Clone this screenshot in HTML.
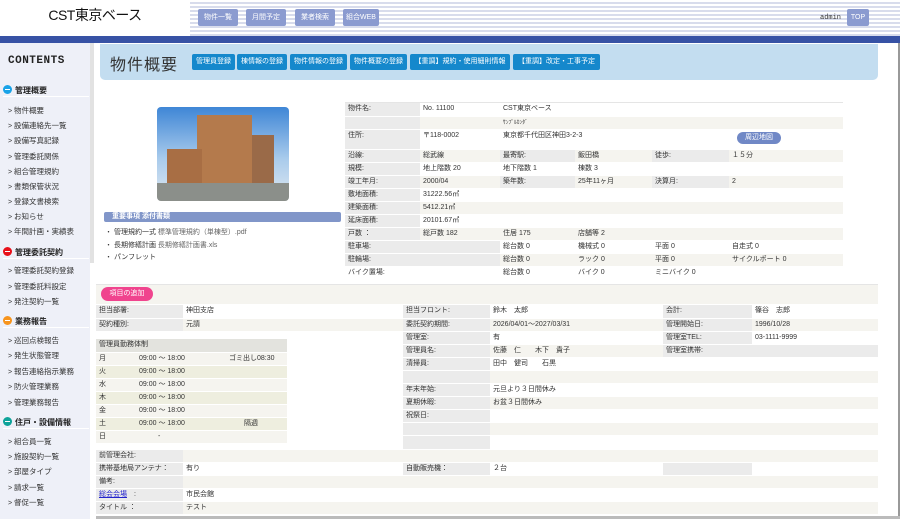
<!DOCTYPE html>
<html><head><meta charset="utf-8"><style>
*{margin:0;padding:0;box-sizing:border-box}
body{width:900px;height:519px;overflow:hidden;background:#fff;font-family:"Liberation Sans","Noto Sans CJK JP",sans-serif;font-size:8px;color:#333;position:relative}
.abs{position:absolute}
#hdr{left:0;top:0;width:900px;height:36px;background:repeating-linear-gradient(#fff 0 2px,#d8dcec 2px 4px)}
#logo{left:0;top:0;width:190px;height:36px;background:#fff;font-size:14px;color:#111;text-align:center;line-height:30px;letter-spacing:-0.5px}
.nb{top:9px;height:17px;background:#8b9bd0;color:#fff;font-size:7px;line-height:17px;text-align:center;border-radius:2px}
#bar{left:0;top:36px;width:900px;height:7px;background:#3752a5}
#side{left:0;top:43px;width:90px;height:476px;background:#eef0f8}
#sb{left:90px;top:43px;width:6px;height:476px;background:#fff}
#sbt{left:90px;top:43px;width:4px;height:220px;background:#e2e2e2}
.sh{left:3px;font-size:8px;font-weight:bold;color:#222;width:86px;border-bottom:1px solid #fff;height:12px}
.sh i{display:inline-block;width:9px;height:9px;border-radius:50%;vertical-align:-1px;margin-right:3px;position:relative}
.sh i:after{content:"";position:absolute;left:2px;top:4px;width:5px;height:1px;background:#fff}
.si{left:8px;font-size:7.5px;color:#333}
.si:before{content:"> ";font-size:7px}
#tp{left:100px;top:44px;width:778px;height:36px;background:#c3ddf0;border-radius:0 0 5px 5px}
#tt{left:110px;top:51px;font-size:16px;color:#333;letter-spacing:1px}
.tb{top:54px;height:16px;background:#1588cc;color:#fff;font-size:7px;line-height:16px;text-align:center;border-radius:2px}
table{border-collapse:collapse;table-layout:fixed;position:absolute}
td{padding:0 3px;font-size:7px;white-space:nowrap;overflow:hidden;border-bottom:1px solid #fff;vertical-align:top;line-height:12px}
.L{background:#ebebeb}
.g{background:#f5f4ef}
.w{background:#fff}
</style></head><body>
<div id="hdr" class="abs"></div>
<div id="logo" class="abs">CST東京ベース</div>
<div class="abs nb" style="left:198px;width:40px">物件一覧</div>
<div class="abs nb" style="left:246px;width:40px">月間予定</div>
<div class="abs nb" style="left:295px;width:40px">業者検索</div>
<div class="abs nb" style="left:343px;width:36px">組合WEB</div>
<div class="abs" style="left:820px;top:14px;font-size:7px;font-family:'Liberation Mono',monospace;color:#333">admin</div>
<div class="abs nb" style="left:847px;width:22px">TOP</div>
<div id="bar" class="abs"></div>
<div class="abs" style="left:898px;top:43px;width:2px;height:476px;background:#999"></div>
<div id="side" class="abs"></div>
<div id="sb" class="abs"></div><div id="sbt" class="abs"></div>
<div class="abs" style="left:8px;top:55px;font-size:11px;font-weight:bold;font-family:'Liberation Mono',monospace;color:#222;letter-spacing:0.5px">CONTENTS</div>
<div class="abs sh" style="top:85px"><i style="background:#19a3e8"></i>管理概要</div>
<div class="abs si" style="top:105px">物件概要</div>
<div class="abs si" style="top:120px">設備連絡先一覧</div>
<div class="abs si" style="top:135px">設備写真記録</div>
<div class="abs si" style="top:151px">管理委託関係</div>
<div class="abs si" style="top:166px">組合管理規約</div>
<div class="abs si" style="top:181px">書類保管状況</div>
<div class="abs si" style="top:196px">登録文書検索</div>
<div class="abs si" style="top:211px">お知らせ</div>
<div class="abs si" style="top:226px">年間計画・実績表</div>
<div class="abs sh" style="top:247px"><i style="background:#e8101a"></i>管理委託契約</div>
<div class="abs si" style="top:265px">管理委託契約登録</div>
<div class="abs si" style="top:281px">管理委託料設定</div>
<div class="abs si" style="top:296px">発注契約一覧</div>
<div class="abs sh" style="top:316px"><i style="background:#f7941d"></i>業務報告</div>
<div class="abs si" style="top:335px">巡回点検報告</div>
<div class="abs si" style="top:350px">発生状態管理</div>
<div class="abs si" style="top:366px">報告連絡指示業務</div>
<div class="abs si" style="top:381px">防火管理業務</div>
<div class="abs si" style="top:397px">管理業務報告</div>
<div class="abs sh" style="top:417px"><i style="background:#0ea39a"></i>住戸・設備情報</div>
<div class="abs si" style="top:436px">組合員一覧</div>
<div class="abs si" style="top:451px">施設契約一覧</div>
<div class="abs si" style="top:466px">部屋タイプ</div>
<div class="abs si" style="top:482px">請求一覧</div>
<div class="abs si" style="top:497px">督促一覧</div>

<div id="tp" class="abs"></div>
<div id="tt" class="abs">物件概要</div>
<div class="abs tb" style="left:192px;width:43px">管理員登録</div>
<div class="abs tb" style="left:237px;width:50px">棟情報の登録</div>
<div class="abs tb" style="left:290px;width:57px">物件情報の登録</div>
<div class="abs tb" style="left:350px;width:57px">物件概要の登録</div>
<div class="abs tb" style="left:410px;width:100px">【重調】規約・使用細則情報</div>
<div class="abs tb" style="left:513px;width:87px">【重調】改定・工事予定</div>

<div class="abs" style="left:157px;top:107px;width:132px;height:94px;border-radius:4px;overflow:hidden;background:linear-gradient(#3f86d6,#a9cbec 55%,#dfe8f0)">
<div class="abs" style="left:40px;top:8px;width:55px;height:70px;background:#b47a4c"></div>
<div class="abs" style="left:10px;top:42px;width:35px;height:36px;background:#a86e44"></div>
<div class="abs" style="left:95px;top:28px;width:22px;height:50px;background:#9a6a48"></div>
<div class="abs" style="left:0;top:76px;width:132px;height:18px;background:#8b8f8a"></div>
</div>
<div class="abs" style="left:104px;top:212px;width:237px;height:10px;background:#8196c9;border-radius:2px;color:#fff;font-size:7px;font-weight:bold;line-height:10px;padding-left:8px">重要事項 添付書類</div>
<div class="abs" style="left:105px;top:227px;font-size:7px;line-height:12.5px;color:#333">・ 管理規約一式 <span style="color:#666">標準管理規約（単棟型）.pdf</span><br>・ 長期修繕計画 <span style="color:#666">長期修繕計画書.xls</span><br>・ パンフレット</div>

<div class="abs" style="left:345px;top:102px;width:498px;height:1px;background:#e5e5e5"></div>
<table style="left:345px;top:103px;width:498px">
<colgroup><col style="width:75px"><col style="width:80px"><col style="width:75px"><col style="width:77px"><col style="width:77px"><col style="width:114px"></colgroup>
<tr style="height:13px"><td class="L">物件名:</td><td class="w">No. 11100</td><td class="w" colspan="4">CST東京ベース</td></tr>
<tr style="height:13px"><td class="L"></td><td class="g"></td><td class="g" colspan="4" style="font-size:5.5px">ｻﾝﾌﾟﾙｶﾝﾀﾞ</td></tr>
<tr style="height:20px"><td class="L">住所:</td><td class="w">〒118-0002</td><td class="w" colspan="3">東京都千代田区神田3-2-3</td><td class="w"><span style="display:inline-block;margin-left:5px;margin-top:2px;background:#7088c6;color:#fff;border-radius:7px;padding:0 8px;line-height:12px">周辺地図</span></td></tr>
<tr style="height:13px"><td class="L">沿線:</td><td class="g">総武線</td><td class="L">最寄駅:</td><td class="g">飯田橋</td><td class="L">徒歩:</td><td class="g">１５分</td></tr>
<tr style="height:13px"><td class="L">規模:</td><td class="w">地上階数 20</td><td class="w">地下階数 1</td><td class="w">棟数 3</td><td class="w"></td><td class="w"></td></tr>
<tr style="height:13px"><td class="L">竣工年月:</td><td class="g">2000/04</td><td class="L">築年数:</td><td class="g">25年11ヶ月</td><td class="L">決算月:</td><td class="g">2</td></tr>
<tr style="height:12px"><td class="L">敷地面積:</td><td class="w" colspan="5">31222.56㎡</td></tr>
<tr style="height:13px"><td class="L">建築面積:</td><td class="g" colspan="5">5412.21㎡</td></tr>
<tr style="height:13px"><td class="L">延床面積:</td><td class="w" colspan="5">20101.67㎡</td></tr>
<tr style="height:13px"><td class="L">戸数 ：</td><td class="g">総戸数 182</td><td class="g">住居 175</td><td class="g">店舗等 2</td><td class="g"></td><td class="g"></td></tr>
<tr style="height:13px"><td class="L" colspan="2">駐車場:</td><td class="w">総台数 0</td><td class="w">機械式 0</td><td class="w">平面 0</td><td class="w">自走式 0</td></tr>
<tr style="height:12px"><td class="L" colspan="2">駐輪場:</td><td class="g">総台数 0</td><td class="g">ラック 0</td><td class="g">平面 0</td><td class="g">サイクルポート 0</td></tr>
<tr style="height:13px"><td class="w" colspan="2">バイク置場:</td><td class="w">総台数 0</td><td class="w">バイク 0</td><td class="w">ミニバイク 0</td><td class="w"></td></tr>
</table>

<div class="abs" style="left:96px;top:284px;width:782px;height:20px;background:#f5f4ef;border-top:1px solid #e5e5e5"></div>
<div class="abs" style="left:101px;top:287px;width:52px;height:14px;background:#f0448e;border-radius:7px;color:#fff;font-size:7px;line-height:14px;text-align:center">項目の追加</div>

<table style="left:96px;top:305px;width:782px">
<colgroup><col style="width:87px"><col style="width:110px"><col style="width:110px"><col style="width:87px"><col style="width:173px"><col style="width:89px"><col style="width:126px"></colgroup>
<tr style="height:13px"><td class="L">担当部署:</td><td class="w" colspan="2">神田支店</td><td class="L">担当フロント:</td><td class="w">鈴木　太郎</td><td class="L">会計:</td><td class="w">篠谷　志郎</td></tr>
<tr style="height:13px"><td class="L">契約種別:</td><td class="g" colspan="2">元請</td><td class="L">委託契約期間:</td><td class="g">2026/04/01～2027/03/31</td><td class="L">管理開始日:</td><td class="g">1996/10/28</td></tr>
<tr style="height:13px"><td colspan="3" class="w"></td><td class="L">管理室:</td><td class="w">有</td><td class="L">管理室TEL:</td><td class="w">03-1111-9999</td></tr>
<tr style="height:13px"><td colspan="3" class="w"></td><td class="L">管理員名:</td><td class="g">佐藤　仁　　木下　貴子</td><td class="L">管理室携帯:</td><td class="L"></td></tr>
<tr style="height:13px"><td colspan="3" class="w"></td><td class="L">清掃員:</td><td class="w" colspan="3">田中　健司　　石黒</td></tr>
<tr style="height:13px"><td colspan="3" class="w"></td><td class="L"></td><td class="g" colspan="3"></td></tr>
<tr style="height:13px"><td colspan="3" class="w"></td><td class="L">年末年始:</td><td class="w" colspan="3">元旦より３日間休み</td></tr>
<tr style="height:13px"><td colspan="3" class="w"></td><td class="L">夏期休暇:</td><td class="g" colspan="3">お盆３日間休み</td></tr>
<tr style="height:13px"><td colspan="3" class="w"></td><td class="L">祝祭日:</td><td class="w" colspan="3"></td></tr>
<tr style="height:13px"><td colspan="3" class="w"></td><td class="L"></td><td class="g" colspan="3"></td></tr>
<tr style="height:14px"><td colspan="3" class="w"></td><td class="L"></td><td class="w" colspan="3"></td></tr>
<tr style="height:13px"><td class="L">前管理会社:</td><td class="g" colspan="6"></td></tr>
<tr style="height:13px"><td class="L">携帯基地局アンテナ：</td><td class="w" colspan="2">有り</td><td class="L">自動販売機：</td><td class="w">２台</td><td class="L"></td><td class="w"></td></tr>
<tr style="height:13px"><td class="L">備考:</td><td class="g" colspan="6"></td></tr>
<tr style="height:13px"><td class="L"><span style="color:#22c;text-decoration:underline">総会会場</span>　:</td><td class="w" colspan="6">市民会館</td></tr>
<tr style="height:13px"><td class="L">タイトル ：</td><td class="g" colspan="6">テスト</td></tr>
</table>

<table style="left:96px;top:339px;width:191px">
<colgroup><col style="width:40px"><col style="width:90px"><col style="width:61px"></colgroup>
<tr style="height:13px"><td class="L" colspan="3" style="background:#e3e3de">管理員勤務体制</td></tr>
<tr style="height:13px"><td class="g">月</td><td class="g">09:00 ～ 18:00</td><td class="g">ゴミ出し08:30</td></tr>
<tr style="height:13px"><td style="background:#eeeedf">火</td><td style="background:#eeeedf">09:00 ～ 18:00</td><td style="background:#eeeedf"></td></tr>
<tr style="height:12px"><td class="g">水</td><td class="g">09:00 ～ 18:00</td><td class="g"></td></tr>
<tr style="height:13px"><td style="background:#eeeedf">木</td><td style="background:#eeeedf">09:00 ～ 18:00</td><td style="background:#eeeedf"></td></tr>
<tr style="height:12px"><td class="g">金</td><td class="g">09:00 ～ 18:00</td><td class="g"></td></tr>
<tr style="height:13px"><td style="background:#eeeedf">土</td><td style="background:#eeeedf">09:00 ～ 18:00</td><td style="background:#eeeedf;padding-left:18px">隔週</td></tr>
<tr style="height:13px"><td class="g">日</td><td class="g" style="padding-left:22px">-</td><td class="g"></td></tr>
</table>
<div class="abs" style="left:96px;top:516px;width:804px;height:3px;background:#bbb"></div>
</body></html>
